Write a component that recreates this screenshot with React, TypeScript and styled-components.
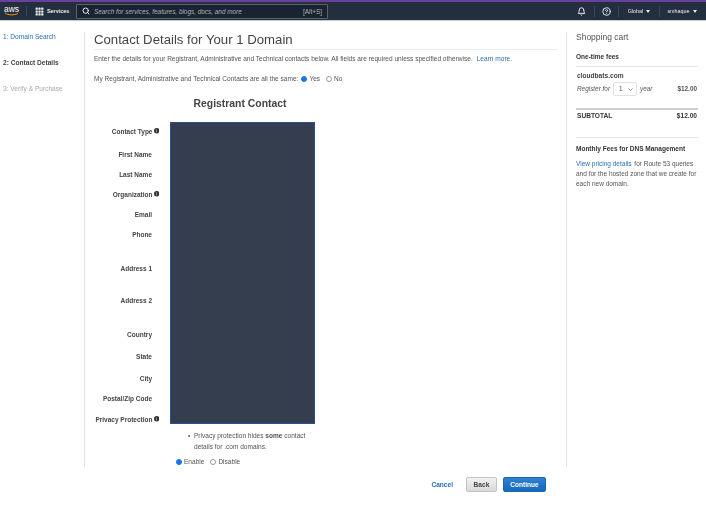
import styled, { createGlobalStyle } from 'styled-components';
import { FiBell, FiHelpCircle, FiSearch } from 'react-icons/fi';
import { BsGrid3X3GapFill, BsInfoCircleFill } from 'react-icons/bs';

const GlobalStyle = createGlobalStyle`
  html, body {
    margin: 0;
    padding: 0;
    background: #fff;
    font-family: "Liberation Sans", Arial, sans-serif;
    color: #555;
  }
`;

const Page = styled.div`
  width: 706px;
  height: 514px;
  overflow: hidden;
  display: flex;
  flex-direction: column;
  filter: blur(0.4px);
`;

const TopBar = styled.header`
  height: 18px;
  flex: none;
  display: flex;
  align-items: center;
  background: #232f3e;
  border-top: 2px solid #6b3fa0;
  border-bottom: 1px solid #c9ccd0;
  color: #e8eaed;
  font-size: 6px;
`;

const Logo = styled.div`
  width: 22px;
  margin-left: 4px;
  border-right: 1px solid #3b4757;
  display: flex;
  flex-direction: column;
  align-items: flex-start;
  color: #fff;
  font-size: 8.4px;
  line-height: 7px;
  svg {
    margin-top: -1px;
  }
`;

const ServicesButton = styled.div`
  display: flex;
  align-items: center;
  gap: 3px;
  width: 41px;
  margin-left: 8px;
  font-size: 5.4px;
  font-weight: 700;
  svg {
    font-size: 9px;
  }
`;

const SearchBox = styled.div`
  width: 252px;
  height: 15px;
  box-sizing: border-box;
  display: flex;
  align-items: center;
  gap: 4px;
  padding: 0 5px;
  background: #1a2430;
  border: 1px solid #59636f;
  border-radius: 1px;
  font-size: 6.4px;
  color: #aab1b9;
  svg {
    color: #e8eaed;
    font-size: 8px;
    stroke-width: 3;
  }
`;

const Placeholder = styled.span`
  flex: 1;
  font-style: italic;
`;

const NavRight = styled.div`
  margin-left: auto;
  display: flex;
  align-items: center;
  height: 100%;
  padding-right: 2px;
`;

const NavItem = styled.div<{ $width: number; $divider?: boolean }>`
  width: ${(p) => p.$width}px;
  height: 11px;
  display: flex;
  align-items: center;
  justify-content: center;
  gap: 2px;
  font-size: 5.4px;
  border-right: ${(p) => (p.$divider ? '1px solid #3b4757' : 'none')};
  svg {
    font-size: 9px;
    stroke-width: 2.6;
  }
`;

const Caret = styled.span`
  width: 0;
  height: 0;
  border-left: 2px solid transparent;
  border-right: 2px solid transparent;
  border-top: 3px solid #e8eaed;
  margin-left: 1px;
`;

const Body = styled.div`
  flex: 1;
  display: flex;
  padding-top: 11px;
`;

const Sidebar = styled.nav`
  width: 85px;
  height: 435px;
  flex: none;
  box-sizing: border-box;
  border-right: 1px solid #e4e4e4;
  padding: 1px 0 0 3px;
  display: flex;
  flex-direction: column;
  gap: 18px;
`;

const Step = styled.div<{ $state: 'link' | 'active' | 'muted' }>`
  font-size: 6.6px;
  line-height: 8px;
  font-weight: ${(p) => (p.$state === 'active' ? 700 : 400)};
  color: ${(p) =>
    p.$state === 'link' ? '#2a6fb5' : p.$state === 'active' ? '#444' : '#aaa'};
`;

const Main = styled.main`
  width: 481px;
  flex: none;
  box-sizing: border-box;
  padding: 0 9px;
`;

const Title = styled.h1`
  margin: 0;
  height: 17px;
  border-bottom: 1px solid #eaeaea;
  font-size: 13.2px;
  line-height: 15px;
  font-weight: 400;
  color: #444;
`;

const Intro = styled.p`
  margin: 4px 0 0;
  font-size: 6.55px;
  line-height: 9px;
`;

const TextLink = styled.a`
  color: #2a6fb5;
  margin-left: 4px;
`;

const SameRow = styled.div`
  margin-top: 11px;
  display: flex;
  align-items: center;
  font-size: 6.55px;
  line-height: 9px;
`;

const Radio = styled.span<{ $on?: boolean }>`
  width: 6px;
  height: 6px;
  flex: none;
  box-sizing: border-box;
  border-radius: 50%;
  border: 1px solid ${(p) => (p.$on ? '#1a73e8' : '#999')};
  background: ${(p) => (p.$on ? '#1a73e8' : '#fff')};
  margin: 0 2px 0 3px;
`;

const RadioGap = styled.span`
  width: 3px;
`;

const FormTitle = styled.h2`
  margin: 14px 0 0;
  width: 292px;
  text-align: center;
  font-size: 10.4px;
  line-height: 13px;
  font-weight: 700;
  color: #444;
`;

const FormGrid = styled.div`
  margin-top: 12px;
  display: flex;
`;

const Labels = styled.div`
  width: 65px;
  flex: none;
  display: flex;
  flex-direction: column;
  align-items: flex-end;
  margin-right: 11px;
`;

const FieldLabel = styled.div<{ $gap: number }>`
  margin-top: ${(p) => p.$gap}px;
  height: 10px;
  display: flex;
  align-items: center;
  gap: 1px;
  white-space: nowrap;
  font-size: 6.5px;
  font-weight: 700;
  color: #444;
  padding-right: 7px;
`;

const InfoLabel = styled(FieldLabel)`
  padding-right: 0;
  svg {
    font-size: 5.5px;
    color: #333;
  }
`;

const RedactedFields = styled.div`
  width: 145px;
  height: 302px;
  box-sizing: border-box;
  background: #343e4e;
  border: 1.5px solid #2c4f8f;
`;

const Notes = styled.div`
  margin-left: 82px;
  font-size: 6.55px;
  line-height: 11px;
  width: 132px;
`;

const NoteList = styled.ul`
  margin: 6px 0 0;
  padding: 0 0 0 18px;
  list-style: none;
  li::before {
    content: '•';
    display: inline-block;
    width: 6px;
    margin-left: -6px;
  }
`;

const NoteRadios = styled.div`
  margin-top: 4px;
  display: flex;
  align-items: center;
  margin-left: -3px;
`;

const Actions = styled.div`
  margin-top: 10px;
  display: flex;
  align-items: center;
  justify-content: flex-end;
  gap: 6px;
  padding-right: 11px;
`;

const CancelLink = styled.a`
  color: #2a6fb5;
  font-size: 6.6px;
  font-weight: 700;
  margin-right: 7px;
`;

const ActionButton = styled.button<{ $primary?: boolean }>`
  width: ${(p) => (p.$primary ? 43 : 31)}px;
  height: 15px;
  padding: 0;
  font-family: inherit;
  font-size: 6.6px;
  font-weight: 700;
  border-radius: 2px;
  color: ${(p) => (p.$primary ? '#fff' : '#444')};
  border: 1px solid ${(p) => (p.$primary ? '#1a66b5' : '#c4c4c4')};
  background: ${(p) =>
    p.$primary
      ? 'linear-gradient(#2f80d0, #1668bd)'
      : 'linear-gradient(#f2f2f2, #d9d9d9)'};
`;

const Cart = styled.aside`
  flex: 1;
  height: 435px;
  box-sizing: border-box;
  border-left: 1px solid #e4e4e4;
  padding: 0 8px 0 9px;
  font-size: 6.5px;
  line-height: 10px;
`;

const CartTitle = styled.h3`
  margin: 0;
  font-size: 8.5px;
  line-height: 11px;
  font-weight: 400;
  color: #555;
`;

const CartHeading = styled.h4`
  margin: 9px 0 0;
  font-size: 6.5px;
  line-height: 9px;
  font-weight: 700;
  color: #333;
`;

const CartItem = styled.div`
  margin-top: 5px;
  padding: 4px 1px 0;
  border-top: 1px solid #e6e6e6;
  height: 42px;
  box-sizing: border-box;
`;

const ItemName = styled.div`
  font-size: 6.6px;
  font-weight: 700;
  color: #444;
`;

const PriceRow = styled.div`
  margin-top: 1px;
  display: flex;
  align-items: center;
  font-size: 6.4px;
`;

const Italic = styled.span`
  font-style: italic;
`;

const YearSelect = styled.div`
  width: 24px;
  height: 14px;
  box-sizing: border-box;
  margin: 0 3px 0 3px;
  padding: 0 3px 0 5px;
  display: flex;
  align-items: center;
  justify-content: space-between;
  border: 1px solid #e2e2e2;
  border-radius: 2px;
  svg {
    display: block;
  }
`;

const Price = styled.span`
  margin-left: auto;
  font-weight: 700;
`;

const SubtotalRow = styled.div`
  border-top: 2px solid #cfcfcf;
  padding: 1px 1px 0;
  height: 30px;
  box-sizing: border-box;
  display: flex;
  font-weight: 700;
  font-size: 6.6px;
  color: #333;
  border-bottom: 1px solid #e6e6e6;
`;

const MonthlyHeading = styled(CartHeading)`
  margin-top: 6px;
`;

const CartText = styled.p`
  margin: 6px 0 0;
  font-size: 6.5px;
  line-height: 10px;
`;

const CartLink = styled.a`
  color: #2a6fb5;
  margin-right: 1px;
`;

const fields: { name: string; gap: number; info?: boolean }[] = [
  { name: 'Contact Type', gap: 4, info: true },
  { name: 'First Name', gap: 13 },
  { name: 'Last Name', gap: 10 },
  { name: 'Organization', gap: 10, info: true },
  { name: 'Email', gap: 10 },
  { name: 'Phone', gap: 10 },
  { name: 'Address 1', gap: 24 },
  { name: 'Address 2', gap: 22 },
  { name: 'Country', gap: 24 },
  { name: 'State', gap: 12 },
  { name: 'City', gap: 12 },
  { name: 'Postal/Zip Code', gap: 10 },
  { name: 'Privacy Protection', gap: 11, info: true },
];

export default function App() {
  return (
    <Page>
      <GlobalStyle />
      <TopBar>
        <Logo>
          aws
          <svg width="15" height="4" viewBox="0 0 15 4" fill="none">
            <path d="M1 1c3 2.4 9 2.4 13 .4" stroke="#f90" strokeWidth="1" />
          </svg>
        </Logo>
        <ServicesButton>
          <BsGrid3X3GapFill />
          Services
        </ServicesButton>
        <SearchBox>
          <FiSearch />
          <Placeholder>Search for services, features, blogs, docs, and more</Placeholder>
          [Alt+S]
        </SearchBox>
        <NavRight>
          <NavItem $width={26} $divider>
            <FiBell />
          </NavItem>
          <NavItem $width={23} $divider>
            <FiHelpCircle />
          </NavItem>
          <NavItem $width={40} $divider>
            Global <Caret />
          </NavItem>
          <NavItem $width={44}>
            smhaque <Caret />
          </NavItem>
        </NavRight>
      </TopBar>
      <Body>
        <Sidebar>
          <Step $state="link">1: Domain Search</Step>
          <Step $state="active">2: Contact Details</Step>
          <Step $state="muted">3: Verify &amp; Purchase</Step>
        </Sidebar>
        <Main>
          <Title>Contact Details for Your 1 Domain</Title>
          <Intro>
            Enter the details for your Registrant, Administrative and Technical contacts below. All
            fields are required unless specified otherwise.
            <TextLink>Learn more.</TextLink>
          </Intro>
          <SameRow>
            My Registrant, Administrative and Technical Contacts are all the same:
            <Radio $on />
            Yes
            <RadioGap />
            <Radio />
            No
          </SameRow>
          <FormTitle>Registrant Contact</FormTitle>
          <FormGrid>
            <Labels>
              {fields.map((f) =>
                f.info ? (
                  <InfoLabel key={f.name} $gap={f.gap}>
                    {f.name}
                    <BsInfoCircleFill />
                  </InfoLabel>
                ) : (
                  <FieldLabel key={f.name} $gap={f.gap}>
                    {f.name}
                  </FieldLabel>
                )
              )}
            </Labels>
            <RedactedFields />
          </FormGrid>
          <Notes>
            <NoteList>
              <li>
                Privacy protection hides <b>some</b> contact details for .com domains.
              </li>
            </NoteList>
            <NoteRadios>
              <Radio $on />
              Enable
              <RadioGap />
              <Radio />
              Disable
            </NoteRadios>
          </Notes>
          <Actions>
            <CancelLink>Cancel</CancelLink>
            <ActionButton>Back</ActionButton>
            <ActionButton $primary>Continue</ActionButton>
          </Actions>
        </Main>
        <Cart>
          <CartTitle>Shopping cart</CartTitle>
          <CartHeading>One-time fees</CartHeading>
          <CartItem>
            <ItemName>cloudbats.com</ItemName>
            <PriceRow>
              <Italic>Register for</Italic>
              <YearSelect>
                1
                <svg width="5" height="3" viewBox="0 0 5 3" fill="none">
                  <path d="M.5.5 2.5 2.5 4.5.5" stroke="#666" strokeWidth=".7" />
                </svg>
              </YearSelect>
              <Italic>year</Italic>
              <Price>$12.00</Price>
            </PriceRow>
          </CartItem>
          <SubtotalRow>
            SUBTOTAL
            <Price>$12.00</Price>
          </SubtotalRow>
          <MonthlyHeading>Monthly Fees for DNS Management</MonthlyHeading>
          <CartText>
            <CartLink>View pricing details</CartLink> for Route 53 queries and for the hosted zone
            that we create for each new domain.
          </CartText>
        </Cart>
      </Body>
    </Page>
  );
}
